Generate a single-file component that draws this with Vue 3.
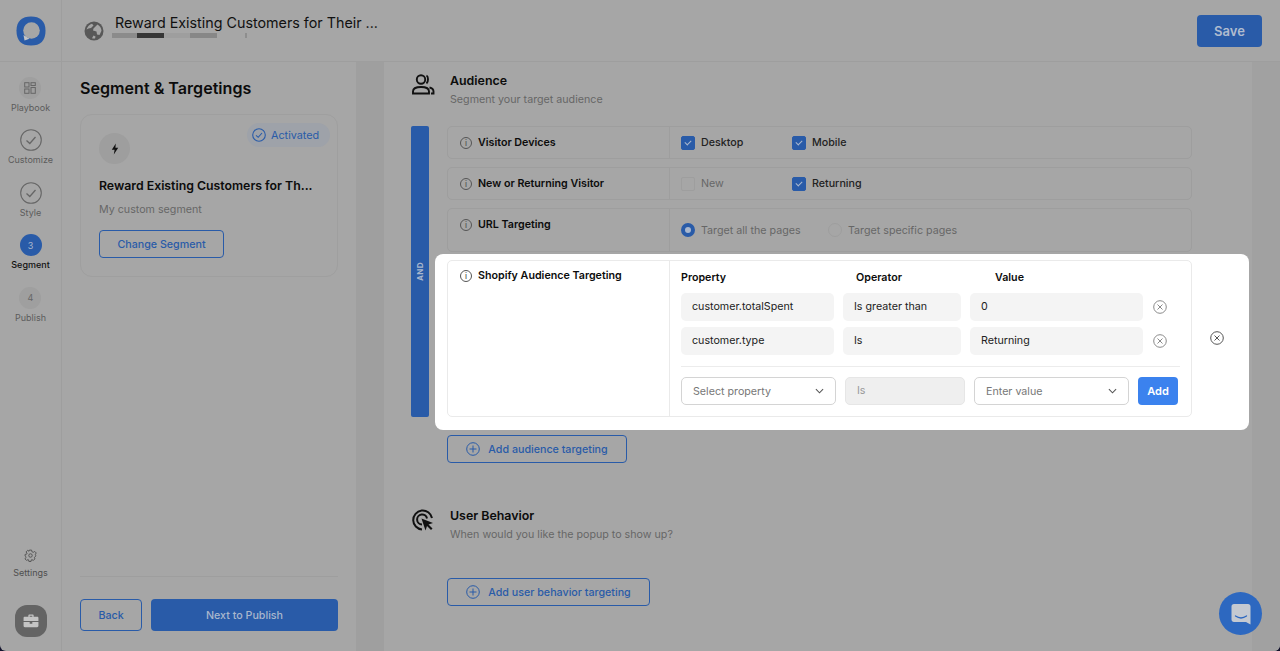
<template>
  <div class="page">
    <header class="topbar">
      <div class="logo-cell">
        <svg class="logo" viewBox="0 0 30 30" width="30" height="30">
          <path d="M15 0.500C24 0.500 29.500 5 29.500 14.500C29.500 25 24.500 29.500 15 29.500C5.500 29.500 0.500 25 0.500 14.500C0.500 5 6 0.500 15 0.500Z" fill="#295ba8" />
          <circle cx="15.500" cy="14.500" r="8.300" fill="#a6a6a6" />
          <path d="M7.500 19L8.500 24.500L13.500 22.800Z" fill="#c4c4c4" />
        </svg>
      </div>
      <div class="doc">
        <svg class="globe" viewBox="0 0 20 20" width="20" height="20">
          <circle cx="10" cy="10" r="9.500" fill="#585858" />
          <path d="M2.500 8.500C3.500 5.500 5.500 3.500 8 2.800L9.500 4.500L7 7L4.500 7.500ZM11 6L13.500 3.500C15.800 4.800 17.300 7 17.500 9.800L15.500 14L13 13.500L12.500 10.500L9 9.500L9.500 7.500ZM8 17.300L9.500 14.500L11.500 15.500L11 17.500C10 17.600 9 17.500 8 17.300Z" fill="#a6a6a6" />
        </svg>
        <div class="doc-text">
          <div class="doc-title">Reward Existing Customers for Their ...</div>
          <div class="doc-bar">
            <span class="b1"></span><span class="b2"></span><span class="b3"></span><span class="b4"></span><span class="b5"></span>
          </div>
        </div>
      </div>
      <button class="save">Save</button>
    </header>

    <div class="body">
      <nav class="rail">
        <div class="steps">
          <div v-for="s in steps" :key="s.label" class="step" :class="{ current: s.kind === 'current' }">
            <span class="step-mark" :class="s.kind">
              <svg v-if="s.kind === 'grid'" viewBox="0 0 12 12" width="12" height="12" fill="none" stroke="#666" stroke-width="1">
                <rect x="0.700" y="0.700" width="4.300" height="4.300" />
                <rect x="7" y="0.700" width="4.300" height="2.800" />
                <rect x="0.700" y="7" width="4.300" height="4.300" />
                <rect x="7" y="5.500" width="4.300" height="5.800" />
              </svg>
              <svg v-else-if="s.kind === 'done'" viewBox="0 0 22 22" width="22" height="22" fill="none" stroke="#666" stroke-width="1.100">
                <circle cx="11" cy="11" r="10.300" />
                <path d="M6.500 11.500L9.800 14.500L15.500 8" stroke-width="1.300" />
              </svg>
              <template v-else>{{ s.num }}</template>
            </span>
            <span class="step-label">{{ s.label }}</span>
          </div>
        </div>
        <div class="rail-bottom">
          <svg viewBox="0 0 24 24" width="13" height="13" fill="none" stroke="#555" stroke-width="1.800">
            <circle cx="12" cy="12" r="3.200" />
            <path d="M10 2h4l.6 3 2.600 1.100 2.600-1.600 2.800 2.800-1.600 2.600L22 12.500l-1 .6v1l-1.800 1.500.9 2.700-2.800 2.800-2.700-1.500-1.100.5-.5 2.900h-4l-.6-3-1.100-.5-2.600 1.600-2.800-2.800 1.600-2.600L3 13.500l-1-.5v-3l3-.6.500-1.100L3.900 5.300l2.800-2.800 2.600 1.600 .1-.1z" />
          </svg>
          <span class="settings-label">Settings</span>
          <span class="case">
            <svg viewBox="0 0 18 16" width="16" height="14" fill="#c4c4c4">
              <path d="M6 3V1.500C6 .9 6.500 .5 7 .5h4c.5 0 1 .4 1 1V3h4c1 0 1.500.6 1.500 1.500V8H.5V4.500C.5 3.600 1 3 2 3zM7.500 2v1h3V2z" />
              <path d="M.5 9.200h7V11h3V9.200h7v4.300c0 1-.6 1.500-1.500 1.500H2c-1 0-1.500-.5-1.500-1.500z" />
            </svg>
          </span>
        </div>
      </nav>

      <aside class="panel">
        <h1>Segment &amp; Targetings</h1>
        <div class="seg-card">
          <div class="badge">
            <svg viewBox="0 0 14 14" width="14" height="14" fill="none" stroke="#295ba8" stroke-width="1.100">
              <circle cx="7" cy="7" r="6.300" />
              <path d="M4 7.300L6.200 9.300L10 5" />
            </svg>
            Activated
          </div>
          <span class="bolt">
            <svg viewBox="0 0 10 14" width="8" height="12" fill="#111">
              <path d="M6 0L1 8H4.500L3.500 14L9 5.500H5.500Z" />
            </svg>
          </span>
          <div class="seg-title">Reward Existing Customers for Th...</div>
          <div class="seg-sub">My custom segment</div>
          <button class="btn-outline change">Change Segment</button>
        </div>
        <div class="panel-foot">
          <button class="btn-outline back">Back</button>
          <button class="next">Next to Publish</button>
        </div>
      </aside>

      <div class="strip"></div>

      <main class="main">
        <section class="sec-head">
          <svg class="sec-icon" viewBox="0 0 24 24" width="24" height="24" fill="none" stroke="#111" stroke-width="1.900">
            <circle cx="10" cy="6.500" r="4.200" />
            <path d="M15.500 2.500C17.500 3.500 17.500 9 15.500 10.500" />
            <path d="M2 20.500V18.500C2 15.500 5 14 10 14C15 14 18 15.500 18 18.500V20.500Z" />
            <path d="M18.500 14.500C21 15 22.500 16.500 22.500 18.500V20.500H20" />
          </svg>
          <div>
            <h2>Audience</h2>
            <p>Segment your target audience</p>
          </div>
        </section>

        <div class="rules">
          <div class="and"><span>AND</span></div>
          <div class="rows">
            <div class="row r-devices">
              <div class="row-label"><span class="info">i</span>Visitor Devices</div>
              <div class="row-value">
                <label class="opt w111"><span class="check on"></span>Desktop</label>
                <label class="opt"><span class="check on"></span>Mobile</label>
              </div>
            </div>
            <div class="row r-devices">
              <div class="row-label"><span class="info">i</span>New or Returning Visitor</div>
              <div class="row-value">
                <label class="opt w111 muted"><span class="check"></span>New</label>
                <label class="opt"><span class="check on"></span>Returning</label>
              </div>
            </div>
            <div class="row r-url">
              <div class="row-label"><span class="info">i</span>URL Targeting</div>
              <div class="row-value">
                <label class="opt w147 muted"><span class="radio on"></span>Target all the pages</label>
                <label class="opt muted"><span class="radio"></span>Target specific pages</label>
              </div>
            </div>

            <div class="row r-shopify">
              <div class="row-label"><span class="info">i</span>Shopify Audience Targeting</div>
              <div class="shopify">
                <div class="col-heads">
                  <span class="h-prop">Property</span>
                  <span class="h-op">Operator</span>
                  <span>Value</span>
                </div>
                <div v-for="c in conditions" :key="c.prop" class="cond">
                  <div class="field f-prop">{{ c.prop }}</div>
                  <div class="field f-op">{{ c.op }}</div>
                  <div class="field f-val">{{ c.val }}</div>
                  <svg class="x" viewBox="0 0 14 14" width="14" height="14" fill="none" stroke="#8a8a8a" stroke-width="1">
                    <circle cx="7" cy="7" r="6.300" />
                    <path d="M4.500 4.500L9.500 9.500M9.500 4.500L4.500 9.500" />
                  </svg>
                </div>
                <div class="add-row">
                  <div class="select s-prop">Select property
                    <svg viewBox="0 0 10 6" width="9" height="6" fill="none" stroke="#555" stroke-width="1.200"><path d="M1 1L5 5L9 1" /></svg>
                  </div>
                  <div class="disabled">Is</div>
                  <div class="select s-val">Enter value
                    <svg viewBox="0 0 10 6" width="9" height="6" fill="none" stroke="#555" stroke-width="1.200"><path d="M1 1L5 5L9 1" /></svg>
                  </div>
                  <button class="add">Add</button>
                </div>
              </div>
              <svg class="x-outer" viewBox="0 0 14 14" width="14" height="14" fill="none" stroke="#555" stroke-width="1">
                <circle cx="7" cy="7" r="6.300" />
                <path d="M4.500 4.500L9.500 9.500M9.500 4.500L4.500 9.500" />
              </svg>
            </div>

            <button class="btn-outline add-target t-aud">
              <svg viewBox="0 0 14 14" width="14" height="14" fill="none" stroke="#295ba8" stroke-width="1">
                <circle cx="7" cy="7" r="6.300" />
                <path d="M7 3.500V10.500M3.500 7H10.500" />
              </svg>
              Add audience targeting
            </button>
          </div>
        </div>

        <section class="sec-head behavior">
          <svg class="sec-icon" viewBox="0 0 24 24" width="24" height="24" fill="none" stroke="#111" stroke-width="2">
            <path d="M11 21.500A9.500 9.500 0 1 1 21 10" />
            <path d="M11 16.500A5 5 0 1 1 16 10.500" />
            <path d="M10.500 10.500L22 15L17.500 16.500L21.500 20.500L20 22L16 18L14.500 22.500Z" fill="#111" stroke="none" />
          </svg>
          <div>
            <h2>User Behavior</h2>
            <p>When would you like the popup to show up?</p>
          </div>
        </section>
        <button class="btn-outline add-target t-beh">
          <svg viewBox="0 0 14 14" width="14" height="14" fill="none" stroke="#295ba8" stroke-width="1">
            <circle cx="7" cy="7" r="6.300" />
            <path d="M7 3.500V10.500M3.500 7H10.500" />
          </svg>
          Add user behavior targeting
        </button>
      </main>

      <div class="strip-right"></div>
    </div>

    <button class="chat">
      <svg viewBox="0 0 24 24" width="24" height="24">
        <path d="M5 2H19C20.500 2 21.500 3 21.500 4.500V22.500L17 20H5C3.500 20 2.500 19 2.500 17.500V4.500C2.500 3 3.500 2 5 2Z" fill="#c4c9d1" />
        <path d="M6.500 14C10 16.500 14 16.500 17.500 14" fill="none" stroke="#2d68c0" stroke-width="1.300" stroke-linecap="round" />
      </svg>
    </button>
  </div>
</template>

<script setup>
const steps = [
  { label: 'Playbook', kind: 'grid' },
  { label: 'Customize', kind: 'done' },
  { label: 'Style', kind: 'done' },
  { label: 'Segment', kind: 'current', num: 3 },
  { label: 'Publish', kind: 'todo', num: 4 },
]

const conditions = [
  { prop: 'customer.totalSpent', op: 'Is greater than', val: '0' },
  { prop: 'customer.type', op: 'Is', val: 'Returning' },
]
</script>

<style>
html, body {
  margin: 0;
  background: #14142e;
}
</style>

<style scoped>
.page {
  position: relative;
  isolation: isolate;
  width: 1280px;
  height: 651px;
  overflow: hidden;
  border-radius: 0 0 6px 6px;
  background: #a6a6a6;
  font-family: Inter, "Liberation Sans", sans-serif;
  color: #0c0c0c;
}

button {
  font-family: inherit;
  cursor: pointer;
}

.topbar {
  display: flex;
  align-items: center;
  height: 62px;
  box-sizing: border-box;
  border-bottom: 1px solid #9e9e9e;
}

.logo-cell {
  width: 62px;
  height: 61px;
  flex: none;
  box-sizing: border-box;
  display: flex;
  align-items: center;
  justify-content: center;
  border-right: 1px solid #9e9e9e;
}

.doc {
  display: flex;
  align-items: center;
  margin-left: 22px;
  flex: 1;
  height: 61px;
}

.globe {
  margin-right: 8px;
}

.doc-text {
  align-self: flex-start;
  padding-top: 13px;
}

.doc-title {
  font-size: 14.300px;
  line-height: 20px;
  margin-left: 3px;
  color: #111;
  white-space: nowrap;
}

.doc-bar {
  display: flex;
  height: 5px;
}

.doc-bar span {
  height: 5px;
}

.b1 { width: 25px; background: #8b8b8b; }
.b2 { width: 27px; background: #363636; }
.b3 { width: 26px; background: #9e9e9e; }
.b4 { width: 27px; background: #878787; }
.b5 { width: 2px; margin-left: 28px; background: #8e8e8e; }

.save {
  width: 65px;
  height: 32px;
  margin-right: 18px;
  border: none;
  border-radius: 4px;
  background: #295ba8;
  color: #b0bccf;
  font-size: 13px;
  font-weight: 600;
  padding: 0;
}

.body {
  display: flex;
  height: 589px;
}

.rail {
  width: 62px;
  flex: none;
  box-sizing: border-box;
  border-right: 1px solid #9e9e9e;
  display: flex;
  flex-direction: column;
  align-items: center;
  justify-content: space-between;
}

.steps {
  display: flex;
  flex-direction: column;
  align-items: center;
  padding-top: 14.500px;
}

.step {
  display: flex;
  flex-direction: column;
  align-items: center;
  height: 52.500px;
}

.step-mark {
  width: 22px;
  height: 22px;
  border-radius: 50%;
  display: flex;
  align-items: center;
  justify-content: center;
  font-size: 9px;
  color: #666;
  flex: none;
}

.step-mark.grid, .step-mark.todo {
  background: #9f9f9f;
}

.step-mark.current {
  background: #295ba8;
  color: #a9b7cd;
}

.step-label {
  font-size: 9px;
  line-height: 12px;
  margin-top: 3px;
  color: #5c5c5c;
  white-space: nowrap;
}

.step.current .step-label {
  color: #111;
  font-weight: 500;
}

.rail-bottom {
  display: flex;
  flex-direction: column;
  align-items: center;
  padding-bottom: 14px;
}

.settings-label {
  font-size: 9px;
  line-height: 12px;
  margin-top: 5px;
  color: #4e4e4e;
}

.case {
  margin-top: 26px;
  width: 32px;
  height: 32px;
  border-radius: 12px;
  background: #646464;
  display: flex;
  align-items: center;
  justify-content: center;
}

.panel {
  width: 258px;
  flex: none;
  padding: 0 18px 20px;
  display: flex;
  flex-direction: column;
}

h1 {
  margin: 14px 0 14px;
  font-size: 16.100px;
  line-height: 24px;
  font-weight: 600;
  color: #0c0c0c;
}

.seg-card {
  position: relative;
  height: 163px;
  box-sizing: border-box;
  padding: 18px 18px 0;
  border: 1px solid #9f9f9f;
  border-radius: 12px;
}

.badge {
  position: absolute;
  top: 8px;
  right: 7px;
  height: 24px;
  width: 83px;
  box-sizing: border-box;
  padding-left: 5px;
  display: flex;
  align-items: center;
  gap: 5px;
  border-radius: 12px;
  background: #9ea2a9;
  color: #295ba8;
  font-size: 10.800px;
}

.bolt {
  width: 31px;
  height: 31px;
  border-radius: 50%;
  background: #9e9e9e;
  display: flex;
  align-items: center;
  justify-content: center;
}

.seg-title {
  margin-top: 14px;
  font-size: 12.300px;
  line-height: 16px;
  font-weight: 600;
  white-space: nowrap;
  color: #0c0c0c;
}

.seg-sub {
  margin-top: 9px;
  font-size: 10.700px;
  line-height: 14px;
  color: #666;
}

.btn-outline {
  display: flex;
  align-items: center;
  justify-content: center;
  box-sizing: border-box;
  background: transparent;
  border: 1px solid #295ba8;
  border-radius: 4px;
  color: #295ba8;
  font-size: 10.700px;
  font-weight: 500;
  padding: 0;
}

.change {
  margin-top: 13px;
  width: 125px;
  height: 28px;
}

.panel-foot {
  margin-top: auto;
  padding-top: 22px;
  border-top: 1px solid #9e9e9e;
  display: flex;
  gap: 9px;
}

.back {
  width: 62px;
  height: 32px;
}

.next {
  flex: 1;
  height: 32px;
  border: none;
  border-radius: 4px;
  background: #295ba8;
  color: #a9b7cd;
  font-size: 10.700px;
  font-weight: 500;
}

.strip {
  width: 28px;
  flex: none;
  background: #9f9f9f;
}

.strip-right {
  width: 28px;
  flex: none;
  background: #a1a1a1;
}

.main {
  flex: 1;
  padding: 0 0 0 27px;
  min-width: 0;
}

.sec-head {
  display: flex;
  align-items: flex-start;
  gap: 15px;
  height: 64px;
  padding-top: 11px;
  box-sizing: border-box;
}

h2 {
  margin: 0;
  font-size: 12.400px;
  line-height: 16px;
  font-weight: 600;
  color: #0c0c0c;
}

.sec-head p {
  margin: 4px 0 0;
  font-size: 10.700px;
  line-height: 14px;
  color: #666;
}

.rules {
  display: flex;
  gap: 18px;
}

.and {
  width: 18px;
  height: 291px;
  border-radius: 2px;
  background: #295ba8;
  display: flex;
  align-items: center;
  justify-content: center;
}

.and span {
  writing-mode: vertical-rl;
  transform: rotate(180deg);
  font-size: 8px;
  font-weight: 700;
  letter-spacing: 0.4px;
  color: #a9b7cd;
}

.rows {
  width: 745px;
  display: flex;
  flex-direction: column;
}

.row {
  position: relative;
  display: flex;
  box-sizing: border-box;
  border: 1px solid #9e9e9e;
  border-radius: 5px;
  font-size: 10.700px;
}

.r-devices {
  height: 33px;
  margin-bottom: 8px;
}

.r-url {
  height: 44px;
  margin-bottom: 8px;
}

.r-shopify {
  height: 157px;
  border-color: #eaeaea;
  background: #fff;
}

.r-shopify::before {
  content: "";
  position: absolute;
  z-index: -1;
  top: -7px;
  left: -13px;
  right: -58px;
  bottom: -14px;
  background: #fff;
  border-radius: 8px;
}

.row-label {
  position: relative;
  width: 222px;
  flex: none;
  box-sizing: border-box;
  padding: 9px 0 0 12px;
  display: flex;
  align-items: flex-start;
  font-weight: 600;
  line-height: 14px;
  border-right: 1px solid #9e9e9e;
  white-space: nowrap;
}

.r-shopify .row-label {
  border-right-color: #eaeaea;
  padding-top: 8px;
  color: #0c0c0c;
}

.info {
  width: 12px;
  height: 12px;
  margin: 1px 6px 0 0;
  box-sizing: border-box;
  border: 1px solid #555;
  border-radius: 50%;
  font-size: 8px;
  line-height: 10px;
  font-weight: 500;
  text-align: center;
  color: #555;
  flex: none;
}

.row-value {
  flex: 1;
  display: flex;
  align-items: center;
  padding-left: 11px;
}

.opt {
  display: flex;
  align-items: center;
  gap: 6px;
  font-weight: 500;
  color: #222;
}

.opt.muted {
  color: #666;
  font-weight: 400;
}

.w111 { width: 111px; }
.w147 { width: 147px; }

.check {
  width: 14px;
  height: 14px;
  box-sizing: border-box;
  border: 1px solid #9e9e9e;
  border-radius: 2px;
  position: relative;
}

.check.on {
  background: #295ba8;
  border-color: #295ba8;
}

.check.on::after {
  content: "";
  position: absolute;
  left: 4px;
  top: 2.500px;
  width: 3px;
  height: 5px;
  border: solid #a9b7cd;
  border-width: 0 1px 1px 0;
  transform: rotate(45deg);
}

.radio {
  width: 14px;
  height: 14px;
  box-sizing: border-box;
  border: 1px solid #9e9e9e;
  border-radius: 50%;
}

.radio.on {
  border: 4.500px solid #295ba8;
  background: #a9b7cd;
}

.shopify {
  position: relative;
  flex: 1;
  padding: 10px 0 0 11px;
}

.col-heads {
  display: flex;
  font-weight: 600;
  line-height: 14px;
  height: 14px;
  margin-bottom: 8px;
  color: #0c0c0c;
}

.h-prop { width: 175px; }
.h-op { width: 139px; }

.cond {
  display: flex;
  align-items: center;
  gap: 9px;
  margin-bottom: 6px;
}

.field {
  height: 28px;
  box-sizing: border-box;
  border-radius: 5px;
  background: #f4f4f4;
  line-height: 28px;
  color: #222;
}

.f-prop { width: 153px; padding-left: 11px; }
.f-op { width: 118px; padding-left: 11px; }
.f-val { width: 173px; padding-left: 11px; }

.x {
  margin-left: 1px;
}

.x-outer {
  position: absolute;
  right: -33px;
  top: 70px;
}

.add-row {
  display: flex;
  gap: 9px;
  margin-top: 11px;
  margin-right: 11px;
  padding-top: 10px;
  border-top: 1px solid #ececec;
}

.select {
  height: 28px;
  box-sizing: border-box;
  border: 1px solid #d4d4d4;
  border-radius: 5px;
  padding: 0 11px;
  display: flex;
  align-items: center;
  justify-content: space-between;
  color: #777;
}

.s-prop, .s-val {
  width: 155px;
}

.disabled {
  width: 120px;
  height: 28px;
  box-sizing: border-box;
  padding-left: 11px;
  line-height: 26px;
  background: #efefef;
  border: 1px solid #e6e6e6;
  border-radius: 5px;
  color: #999;
}

.add {
  width: 40px;
  height: 28px;
  border: none;
  border-radius: 4px;
  background: #3b82ee;
  color: #fff;
  font-size: 11px;
  font-weight: 600;
  padding: 0;
}

.add-target {
  gap: 8px;
  height: 28px;
}

.t-aud {
  width: 180px;
  margin-top: 18px;
}

.behavior {
  margin-top: 34px;
  height: 70px;
}

.t-beh {
  width: 203px;
  margin: 11px 0 0 36px;
}

.chat {
  position: absolute;
  right: 18px;
  bottom: 16px;
  width: 43px;
  height: 43px;
  border: none;
  border-radius: 50%;
  background: #2d68c0;
  display: flex;
  align-items: center;
  justify-content: center;
  padding: 0;
}
</style>
